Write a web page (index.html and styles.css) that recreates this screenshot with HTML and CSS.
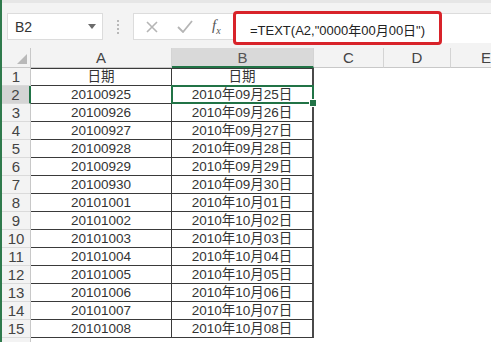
FILE: index.html
```html
<!DOCTYPE html>
<html lang="zh-CN">
<head>
<meta charset="UTF-8">
<title>TEXT 日期格式</title>
<link rel="stylesheet" href="styles.css">
</head>
<body>

<div class="window">
  <!-- Formula bar -->
  <div class="toolbar">
    <div class="name-box">
      <span>B2</span>
      <svg class="caret" width="8" height="5" viewBox="0 0 8 5"><polygon points="0,0 8,0 4,5" fill="#6b6b6b"/></svg>
    </div>
    <div class="grip"><span></span></div>
    <div class="fx-buttons">
      <svg width="12" height="12" viewBox="0 0 12 12"><path d="M1 1 L11 11 M11 1 L1 11" stroke="#b5b5b5" stroke-width="1.6" fill="none"/></svg>
      <svg width="16" height="13" viewBox="0 0 16 13"><path d="M1 7 L6 12 L15 1" stroke="#b5b5b5" stroke-width="1.8" fill="none"/></svg>
      <i class="fx">f<sub>x</sub></i>
    </div>
    <div class="formula-input">
      <div class="formula-mark">=TEXT(A2,"0000年00月00日")</div>
    </div>
  </div>

  <!-- Sheet -->
  <div class="sheet" id="sheet">
    <div class="corner">
      <svg width="10" height="10" viewBox="0 0 10 10"><polygon points="10,0 10,10 0,10" fill="#b9b9b9"/></svg>
    </div>
    <div class="col-head">A</div>
    <div class="col-head active">B</div>
    <div class="col-head">C</div>
    <div class="col-head">D</div>
    <div class="col-head last">E</div>
  </div>
</div>

<script>
// raw dates in column A, formatted in column B
let dates = ["20100925", "20100926", "20100927", "20100928", "20100929", "20100930",
  "20101001", "20101002", "20101003", "20101004", "20101005", "20101006", "20101007", "20101008"];

function addCell(sheet, className, text) {
  const cell = document.createElement('div');
  cell.className = className;
  cell.textContent = text;
  sheet.appendChild(cell);
  return cell;
}

function buildSheet() {
  const sheet = document.getElementById('sheet');
  const rows = [["日期", "日期"]];
  dates.forEach(d => {
    rows.push([d, d.slice(0, 4) + '年' + d.slice(4, 6) + '月' + d.slice(6, 8) + '日']);
  });
  rows.push(["", ""]); // row 16, only its top edge shows

  rows.forEach((row, i) => {
    const n = i + 1;
    const inRange = n <= 15;
    addCell(sheet, 'row-head' + (n === 2 ? ' active' : ''), inRange ? n : '');
    addCell(sheet, 'cell' + (inRange ? ' boxed' : '') + (n === 1 ? ' first' : ''), row[0]);
    const b = addCell(sheet, 'cell col-b' + (inRange ? ' boxed' : '') + (n === 1 ? ' first' : ''), row[1]);
    if (n === 2) {
      b.classList.add('selected');
      b.appendChild(document.createElement('span')).className = 'handle';
    }
    addCell(sheet, 'cell', '');
    addCell(sheet, 'cell', '');
    addCell(sheet, 'cell', '');
  });
}

buildSheet();
</script>

</body>
</html>
```

FILE: styles.css
```css
body {
  margin: 0;
  overflow: hidden;
  font-family: "Liberation Sans", "Noto Sans CJK SC", sans-serif;
  background-color: #fff;
}

.window {
  height: 342px;
  border-left: 2px solid #2f7a4c;
  overflow: hidden;
}

/* formula bar */
.toolbar {
  height: 48px;
  box-sizing: border-box;
  border-top: 3px solid #e6e6e6;
  background-color: #f3f3f3;
  display: flex;
  align-items: flex-start;
  padding: 10px 0 0 5px;
}

.name-box {
  width: 96px;
  height: 27px;
  box-sizing: border-box;
  border: 1px solid #dcdcdc;
  background-color: #fff;
  display: flex;
  align-items: center;
  justify-content: space-between;
  padding: 0 6px 0 7px;
  font-size: 14px;
  color: #333;
}

.grip {
  width: 30px;
  height: 27px;
  display: flex;
  align-items: center;
  justify-content: center;
}

.grip span {
  height: 14px;
  border-left: 2px dotted #b8b8b8;
}

.fx-buttons {
  width: 100px;
  height: 27px;
  box-sizing: border-box;
  border: 1px solid #dcdcdc;
  border-right: none;
  background-color: #fff;
  display: flex;
  align-items: center;
  gap: 19px;
  padding-left: 12px;
}

.fx {
  font-family: "Liberation Serif", serif;
  font-size: 15px;
  color: #555;
}

.fx sub {
  font-size: 10px;
}

.formula-input {
  flex: 1;
  height: 29px;
  background-color: #fff;
  border-top: 1px solid #dcdcdc;
}

.formula-mark {
  width: 209px;
  height: 34px;
  box-sizing: border-box;
  margin-top: -3px;
  border: 3px solid #d8232a;
  border-radius: 4px;
  padding: 6px 0 0 14px;
  font-size: 13px;
  color: #222;
  white-space: nowrap;
}

/* sheet grid */
.sheet {
  display: grid;
  grid-template-columns: 29px 141px 142px 70px 67px 1fr;
  grid-template-rows: 20px;
  grid-auto-rows: 18px;
}

.corner,
.col-head,
.row-head {
  background-color: #f3f3f3;
  color: #444;
  font-size: 15px;
  box-sizing: border-box;
}

.corner {
  border-right: 1px solid #c8c8c8;
  border-bottom: 1px solid #c8c8c8;
  display: flex;
  align-items: flex-end;
  justify-content: flex-end;
  padding: 0 3px 3px 0;
}

.col-head {
  border-right: 1px solid #d4d4d4;
  border-bottom: 1px solid #c8c8c8;
  text-align: center;
  line-height: 20px;
}

.col-head.active {
  background-color: #d9d9d9;
  border-bottom: 2px solid #217346;
  color: #555;
}

.col-head.last {
  border-right: none;
  text-align: left;
  padding-left: 30px;
}

.row-head {
  border-right: 1px solid #c8c8c8;
  border-bottom: 1px solid #dadada;
  text-align: center;
  line-height: 17px;
}

.row-head.active {
  background-color: #d4d4d4;
  border-right: 2px solid #217346;
}

.cell {
  box-sizing: border-box;
  font-size: 13.5px;
  color: #333;
  text-align: center;
  line-height: 17px;
  white-space: nowrap;
}

.cell.boxed {
  border-right: 1px solid #3a3a3a;
  border-bottom: 1px solid #3a3a3a;
}

.cell.col-b.boxed {
  border-right: 2px solid #4a4a4a;
}

.cell.first {
  border-top: 1px solid #3a3a3a;
  line-height: 16px;
}

.cell.selected {
  position: relative;
}

.cell.selected::after {
  content: "";
  position: absolute;
  left: -1px;
  top: -1px;
  right: -2px;
  bottom: -1px;
  border: 2px solid #217346;
}

.handle {
  position: absolute;
  right: -5px;
  bottom: -4px;
  width: 6px;
  height: 6px;
  background-color: #217346;
  border: 1px solid #fff;
  z-index: 1;
}
```
